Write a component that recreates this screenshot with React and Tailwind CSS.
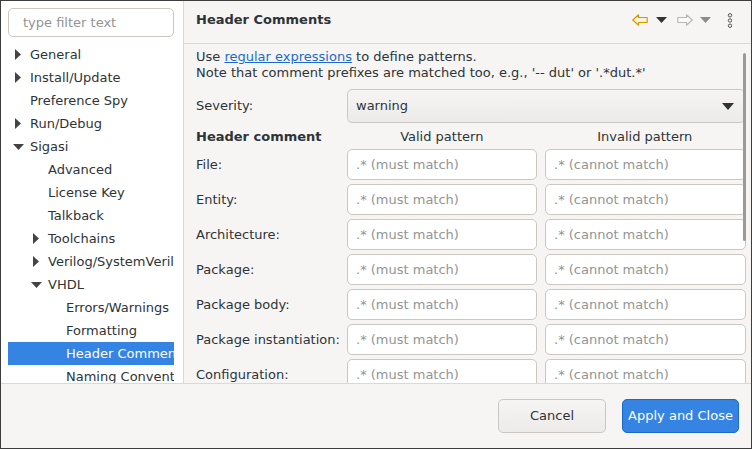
import React from "react";

const tree = [
  { label: "General", level: 0, arrow: "right" },
  { label: "Install/Update", level: 0, arrow: "right" },
  { label: "Preference Spy", level: 0 },
  { label: "Run/Debug", level: 0, arrow: "right" },
  { label: "Sigasi", level: 0, arrow: "down" },
  { label: "Advanced", level: 1 },
  { label: "License Key", level: 1 },
  { label: "Talkback", level: 1 },
  { label: "Toolchains", level: 1, arrow: "right" },
  { label: "Verilog/SystemVerilog", level: 1, arrow: "right" },
  { label: "VHDL", level: 1, arrow: "down" },
  { label: "Errors/Warnings", level: 2 },
  { label: "Formatting", level: 2 },
  { label: "Header Comments", level: 2, selected: true },
  { label: "Naming Conventions", level: 2 },
  { label: "Preferences", level: 2 },
];

const rows = [
  "File:",
  "Entity:",
  "Architecture:",
  "Package:",
  "Package body:",
  "Package instantiation:",
  "Configuration:",
  "Context:",
];

const indent = ["pl-[22px]", "pl-[40px]", "pl-[58px]"];
const arrowPos = ["left-[7px]", "left-[25px]", "left-[43px]"];

function Arrow({ dir }) {
  if (dir === "down") {
    return (
      <svg width="11" height="6" viewBox="0 0 11 6">
        <path d="M0 0 L11 0 L5.5 6 Z" fill="#444" />
      </svg>
    );
  }
  return (
    <svg width="6" height="11" viewBox="0 0 6 11">
      <path d="M0 0 L6 5.5 L0 11 Z" fill="#444" />
    </svg>
  );
}

function TreeRow({ item }) {
  return (
    <div
      className={`relative h-[23px] flex items-center whitespace-nowrap ${indent[item.level]} ${
        item.selected ? "bg-[#3584e4] text-white" : "text-[#2e3436]"
      }`}
    >
      {item.arrow && (
        <span
          className={`absolute top-0 h-[23px] flex items-center ${
            item.arrow === "down" ? "left-[5px]" : arrowPos[item.level]
          } ${item.level === 1 && item.arrow === "down" ? "left-[23px]" : ""}`}
        >
          <Arrow dir={item.arrow} />
        </span>
      )}
      {item.label}
    </div>
  );
}

function PatternInput({ text, wide }) {
  return (
    <div
      className={`h-[31px] ${wide ? "w-[201px]" : "w-[190px]"} shrink-0 bg-white border border-[#cdc7c2] rounded-[5px] flex items-center pl-[8px] text-[#929595] whitespace-nowrap overflow-hidden`}
    >
      {text}
    </div>
  );
}

export default function App() {
  return (
    <div
      className="w-[752px] h-[449px] border border-[#3d3d3d] bg-[#f6f5f4] flex flex-col overflow-hidden text-[13px] text-[#2e3436]"
      style={{ fontFamily: '"DejaVu Sans", "Liberation Sans", sans-serif' }}
    >
      <div className="flex h-[382px] shrink-0">
        {/* sidebar */}
        <div className="w-[183px] shrink-0 bg-white border-r border-[#dcd8d4] pl-[7px] pt-[7px] overflow-hidden">
          <div className="w-[166px] h-[29px] border border-[#cdc7c2] rounded-[5px] flex items-center pl-[14px] text-[#929595]">
            type filter text
          </div>
          <div className="mt-[6px] w-[166px] overflow-hidden">
            {tree.map((item) => (
              <TreeRow key={item.label} item={item} />
            ))}
          </div>
        </div>

        {/* right pane */}
        <div className="relative flex-1 flex flex-col overflow-hidden">
          <div className="h-[43px] shrink-0 border-b border-[#dcd8d4] flex items-center pl-[12px] pr-[18px]">
            <div className="font-bold text-[#2e3436] -mt-[4px]">Header Comments</div>
            <div className="ml-auto flex items-center -mt-[4px]">
              <svg width="16" height="12" viewBox="0 0 16 12">
                <path
                  d="M0.8 6 L6.5 0.8 L6.5 3.5 L15.2 3.5 L15.2 8.5 L6.5 8.5 L6.5 11.2 Z"
                  fill="#fdf4d8"
                  stroke="#d39a00"
                  strokeWidth="1.2"
                  strokeLinejoin="round"
                />
              </svg>
              <svg className="ml-[8px]" width="11" height="6" viewBox="0 0 11 6">
                <path d="M0 0 L11 0 L5.5 6 Z" fill="#2e3436" />
              </svg>
              <svg className="ml-[10px]" width="16" height="12" viewBox="0 0 16 12">
                <path
                  d="M15.2 6 L9.5 0.8 L9.5 3.5 L0.8 3.5 L0.8 8.5 L9.5 8.5 L9.5 11.2 Z"
                  fill="#fafafa"
                  stroke="#b8b8b8"
                  strokeWidth="1.2"
                  strokeLinejoin="round"
                />
              </svg>
              <svg className="ml-[7px]" width="11" height="6" viewBox="0 0 11 6">
                <path d="M0 0 L11 0 L5.5 6 Z" fill="#8c8c8c" />
              </svg>
              <svg className="ml-[16px]" width="6" height="15" viewBox="0 0 6 15">
                <circle cx="3" cy="2.3" r="1.7" fill="none" stroke="#555" strokeWidth="1" />
                <circle cx="3" cy="7.5" r="1.7" fill="none" stroke="#555" strokeWidth="1" />
                <circle cx="3" cy="12.7" r="1.7" fill="none" stroke="#555" strokeWidth="1" />
              </svg>
            </div>
          </div>

          <div className="flex-1 overflow-hidden pl-[12px] pr-[6px] pt-[5px]">
            <div className="leading-[16px]">
              Use{" "}
              <span className="text-[#1b6acb] underline">regular expressions</span>{" "}
              to define patterns.
            </div>
            <div className="leading-[16px] whitespace-nowrap">
              Note that comment prefixes are matched too, e.g., '-- dut' or '.*dut.*'
            </div>

            <div className="mt-[8px] flex items-center">
              <div className="w-[151px] shrink-0">Severity:</div>
              <div className="w-[399px] h-[34px] border border-[#cdc7c2] rounded-[5px] bg-gradient-to-b from-[#f6f5f4] to-[#edebe9] flex items-center pl-[8px] pr-[10px]">
                warning
                <svg className="ml-auto" width="12" height="7" viewBox="0 0 12 7">
                  <path d="M0 0 L12 0 L6 7 Z" fill="#2e3436" />
                </svg>
              </div>
            </div>

            <div className="mt-[5px] h-[18px] flex items-center">
              <div className="w-[151px] shrink-0 font-bold">Header comment</div>
              <div className="w-[190px] text-center">Valid pattern</div>
              <div className="ml-[8px] w-[201px] text-center">Invalid pattern</div>
            </div>

            <div className="mt-[3px] flex flex-col gap-[4px]">
              {rows.map((r) => (
                <div key={r} className="flex items-center">
                  <div className="w-[151px] shrink-0 whitespace-nowrap">{r}</div>
                  <PatternInput text=".* (must match)" />
                  <div className="w-[8px] shrink-0" />
                  <PatternInput text=".* (cannot match)" wide />
                </div>
              ))}
            </div>
          </div>

          {/* scrollbar thumb */}
          <div className="absolute right-[5px] top-[52px] w-[3px] h-[188px] rounded-full bg-[#9a9a9a]" />
        </div>
      </div>

      {/* bottom bar */}
      <div className="flex-1 border-t border-[#dcd8d4] flex items-start justify-end pt-[15px] pr-[12px]">
        <button className="w-[108px] h-[34px] border border-[#cdc7c2] rounded-[5px] bg-gradient-to-b from-[#f6f5f4] to-[#edebe9] text-[#2e3436]">
          Cancel
        </button>
        <button className="ml-[16px] w-[117px] h-[34px] border border-[#1b6acb] rounded-[5px] bg-[#3584e4] text-white">
          Apply and Close
        </button>
      </div>
    </div>
  );
}
